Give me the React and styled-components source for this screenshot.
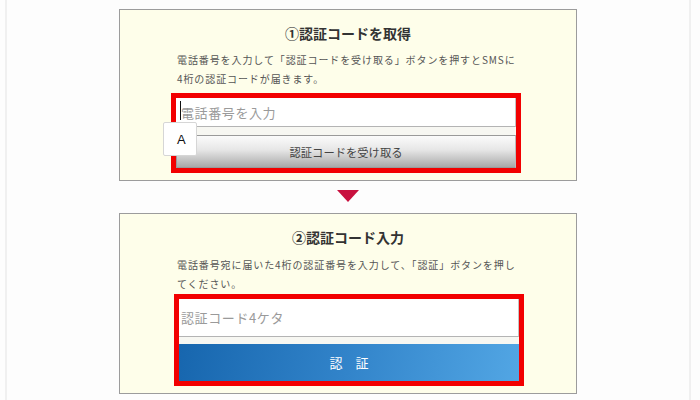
import React from "react";
import styled, { createGlobalStyle } from "styled-components";

const GlobalStyle = createGlobalStyle`
  html, body {
    margin: 0;
    padding: 0;
    background: #fdfdfd;
  }
  body {
    font-family: "Noto Sans CJK JP", "Noto Sans", sans-serif;
  }
`;

const Page = styled.div`
  width: 686px;
  height: 400px;
  margin: 0 5px;
  border-left: 2px solid #f0f0f0;
  border-right: 2px solid #f0f0f0;
  background: #fdfdfd;
  display: flex;
  flex-direction: column;
  align-items: center;
  padding-top: 9px;
  box-sizing: border-box;
  overflow: hidden;
`;

const Card = styled.section`
  width: 458px;
  box-sizing: border-box;
  border: 1px solid #9c9c9c;
  background: #fefeea;
  padding: 12px 0 7px;
  display: flex;
  flex-direction: column;
  align-items: center;
`;

const Title = styled.h2`
  margin: 0;
  font-size: 14px;
  line-height: 22px;
  font-weight: bold;
  color: #333;
`;

const Desc = styled.p`
  margin: ${(p) => p.$top}px 0 0;
  width: 342px;
  white-space: nowrap;
  font-size: 10px;
  line-height: 19px;
  letter-spacing: 0.9px;
  color: #555;
`;

const RedBox = styled.div`
  position: relative;
  margin-top: ${(p) => p.$top}px;
  margin-left: ${(p) => p.$shift}px;
  width: 350px;
  box-sizing: border-box;
  border: 5px solid #f20000;
  background: #f7f7f2;
  display: flex;
  flex-direction: column;
  gap: ${(p) => p.$gap}px;
`;

const Field = styled.input`
  display: block;
  height: ${(p) => p.$h}px;
  box-sizing: border-box;
  border: none;
  border-bottom: 1px solid #b4b4b4;
  border-right: 1px solid #c4c4c4;
  background: #fff;
  padding: 0 0 0 ${(p) => p.$pad}px;
  font-family: "Noto Sans CJK JP", sans-serif;
  font-size: 13px;
  letter-spacing: 0.6px;
  color: #333;
  outline: none;
  &::placeholder {
    color: #9a9a9a;
  }
`;

const GrayButton = styled.button`
  height: 33px;
  box-sizing: border-box;
  border: 1px solid #9a9a9a;
  border-right-color: #bbb;
  background: linear-gradient(#fbfbfb 0%, #e6e6e6 45%, #a9a9a9 100%);
  font-family: "Noto Sans CJK JP", sans-serif;
  font-size: 11.3px;
  color: #444;
  padding: 1px 0 0;
`;

const BlueButton = styled.button`
  height: 37px;
  box-sizing: border-box;
  border: none;
  background: linear-gradient(100deg, #1766ae 0%, #3284ca 50%, #52a6e4 100%);
  font-family: "Noto Sans CJK JP", sans-serif;
  font-size: 13px;
  color: #fff;
  padding: 0;
`;

const Caret = styled.span`
  position: absolute;
  left: 4px;
  top: 3px;
  width: 1px;
  height: 19px;
  background: #111;
`;

const ImeBadge = styled.div`
  position: absolute;
  left: -13px;
  top: 24px;
  width: 34px;
  height: 34px;
  box-sizing: border-box;
  background: #fff;
  border: 1px solid #d6d6d6;
  border-radius: 2px;
  font-family: "Liberation Sans", Arial, sans-serif;
  font-size: 13px;
  color: #111;
  padding: 9px 0 0 13px;
`;

const ArrowRow = styled.div`
  height: 32px;
  display: flex;
  align-items: flex-start;
  justify-content: center;
  padding-top: 9px;
  box-sizing: border-box;
`;

const Arrow = styled.div`
  width: 0;
  height: 0;
  border-left: 11.5px solid transparent;
  border-right: 11.5px solid transparent;
  border-top: 12px solid #c8103e;
`;

export default function App() {
  return (
    <>
      <GlobalStyle />
      <Page>
        <Card>
          <Title>①認証コードを取得</Title>
          <Desc $top={6}>
            電話番号を入力して「認証コードを受け取る」ボタンを押すとSMSに
            <br />
            4桁の認証コードが届きます。
          </Desc>
          <RedBox $top={5} $shift={-4} $gap={8}>
            <Field type="tel" placeholder="電話番号を入力" $h={29} $pad={5} />
            <Caret />
            <ImeBadge>A</ImeBadge>
            <GrayButton type="button">認証コードを受け取る</GrayButton>
          </RedBox>
        </Card>
        <ArrowRow>
          <Arrow />
        </ArrowRow>
        <Card>
          <Title>②認証コード入力</Title>
          <Desc $top={7}>
            電話番号宛に届いた4桁の認証番号を入力して、「認証」ボタンを押し
            <br />
            てください。
          </Desc>
          <RedBox $top={1} $shift={2} $gap={7}>
            <Field type="text" placeholder="認証コード4ケタ" $h={38} $pad={2} />
            <BlueButton type="button">認　証</BlueButton>
          </RedBox>
        </Card>
      </Page>
    </>
  );
}
